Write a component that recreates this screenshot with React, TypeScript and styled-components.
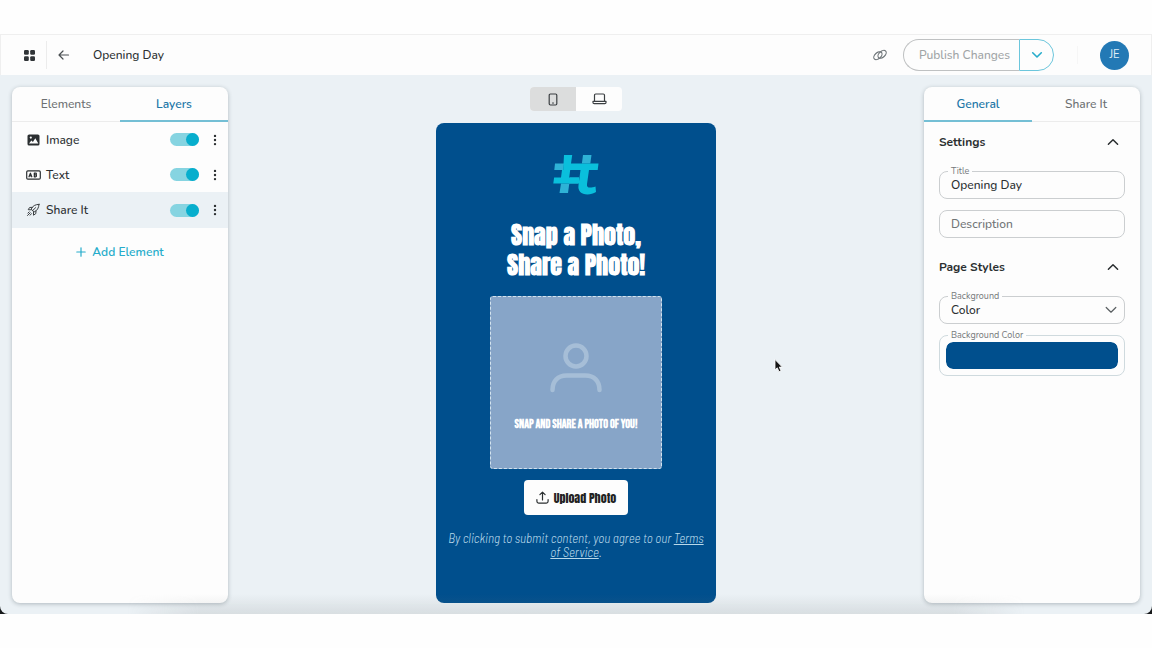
import React, { useState } from "react";
import styled, { createGlobalStyle, css } from "styled-components";

const ui = `Nunito, Lato, "Noto Sans", sans-serif`;
const display = `Anton, "Roboto Condensed", "Liberation Sans Narrow", sans-serif`;
const caps = `"Bebas Neue", Anton, "Roboto Condensed", sans-serif`;
const narrow = `"Barlow Semi Condensed", Barlow, "Roboto Condensed", Roboto, sans-serif`;

const GlobalStyle = createGlobalStyle`
  *, *::before, *::after { box-sizing: border-box; }
  body { margin: 0; background: #fefefe; color: #2b2f31; font-family: ${ui}; font-size: 12px; line-height: 16px; }
  button, input, select { font: inherit; color: inherit; }
  button { cursor: pointer; padding: 0; border: 0; background: none; }
  h1, h2, p, ul { margin: 0; padding: 0; }
  svg { display: block; flex: none; }
`;

const Page = styled.div`
  display: flex;
  flex-direction: column;
  min-height: 100vh;
  padding: 34px 0;
`;

const TopBar = styled.header`
  display: flex;
  align-items: center;
  height: 41px;
  border: 1px solid #efefef;
  border-bottom: 0;
  background: #fdfdfd;
`;

const MenuButton = styled.button`
  display: flex;
  align-items: center;
  justify-content: center;
  width: 46px;
  height: 28px;
  padding-left: 11px;
  border-right: 1px solid #ececec;
`;

const BackButton = styled.button`
  display: flex;
  margin: 0 22px 0 10px;
`;

const ProjectName = styled.h1`
  flex: 1;
  font-size: 12px;
  font-weight: 500;
  line-height: 16px;
`;

const LinkButton = styled.button`
  display: flex;
  margin-right: 16px;
`;

const PublishGroup = styled.div`
  display: flex;
  height: 32px;
`;

const PublishButton = styled.button`
  width: 116px;
  padding-left: 6px;
  border: 1px solid #bfc1c2;
  border-right: 0;
  border-radius: 16px 0 0 16px;
  color: #a0a4a6;
  font-weight: 500;
`;

const PublishMenuButton = styled.button`
  display: flex;
  align-items: center;
  justify-content: center;
  width: 35px;
  border: 1px solid #6cc6dc;
  border-radius: 0 16px 16px 0;
`;

const Divider = styled.span`
  width: 1px;
  height: 18px;
  margin: 0 22px 0 23px;
  background: #f6f6f6;
`;

const Avatar = styled.button`
  width: 29px;
  height: 29px;
  margin-right: 22px;
  border-radius: 50%;
  background: #2379b5;
  color: #e2eff8;
  font-size: 11px;
`;

const WindowBase = styled.div`
  display: flex;
  flex: 1;
  background: #17191b;
`;

const Workspace = styled.main`
  position: relative;
  display: grid;
  grid-template-columns: 216px 1fr 216px;
  flex: 1;
  padding: 12px 12px 11px;
  border-radius: 0 0 8px 8px;
  background: #ebf1f5;

  &::after {
    content: "";
    position: absolute;
    left: 11%;
    right: 11%;
    bottom: 0;
    height: 20px;
    background: linear-gradient(to bottom, rgba(120, 125, 125, 0), rgba(120, 125, 125, 0.16));
    mask-image: linear-gradient(to right, transparent, #000 8%, #000 92%, transparent);
    pointer-events: none;
  }
`;

const Panel = styled.aside`
  border-radius: 8px;
  background: #fdfdfd;
  box-shadow: 0 1px 4px rgba(50, 65, 75, 0.32);
  overflow: hidden;
`;

const Tabs = styled.div`
  display: grid;
  grid-template-columns: 1fr 1fr;
  height: 35px;
`;

const Tab = styled.button<{ $active?: boolean }>`
  border-bottom: 1px solid #ececec;
  color: #6c7072;
  font-weight: 500;
  ${(p) =>
    p.$active &&
    css`
      border-bottom: 2px solid #74bfd5;
      color: #2177a8;
      font-weight: 600;
    `}
`;

const LayerList = styled.ul`
  list-style: none;
`;

const LayerRow = styled.li<{ $selected?: boolean }>`
  display: flex;
  align-items: center;
  height: 35px;
  padding: 0 10px 0 14px;
  ${(p) =>
    p.$selected &&
    css`
      height: 36px;
      background: #ebf1f5;
    `}
`;

const LayerName = styled.label`
  display: flex;
  align-items: center;
  gap: 5px;
  flex: 1;
  font-weight: 500;
`;

const Switch = styled.input`
  appearance: none;
  display: flex;
  width: 29px;
  height: 13px;
  margin: 0 13px 0 0;
  border-radius: 7px;
  background: #c8ccce;
  cursor: pointer;

  &::before {
    content: "";
    width: 13px;
    height: 13px;
    border-radius: 50%;
    background: #8d9498;
  }
  &:checked {
    justify-content: flex-end;
    background: #86d4e1;
  }
  &:checked::before {
    background: #07aecd;
  }
`;

const MoreButton = styled.button`
  display: flex;
`;

const AddButton = styled.button`
  display: flex;
  align-items: center;
  gap: 6px;
  margin: 16px auto 0;
  color: #26accb;
  font-weight: 600;
`;

const Canvas = styled.section`
  display: flex;
  flex-direction: column;
  align-items: center;
`;

const DeviceSwitch = styled.div`
  display: grid;
  grid-template-columns: 1fr 1fr;
  width: 92px;
  height: 24px;
  margin-bottom: 12px;
  border-radius: 4px;
  background: #fdfdfd;
  overflow: hidden;
`;

const DeviceButton = styled.button<{ $active?: boolean }>`
  display: flex;
  align-items: center;
  justify-content: center;
  background: ${(p) => (p.$active ? "#dcdddd" : "transparent")};
`;

const Phone = styled.article`
  display: flex;
  flex-direction: column;
  align-items: center;
  flex: 1;
  width: 280px;
  padding: 31px 12px;
  border-radius: 8px;
  background: #004f8d;
  color: #fff;
`;

const Headline = styled.h2`
  margin: 24px 0 16px;
  font-family: ${display};
  font-size: 24px;
  font-weight: 700;
  line-height: 30px;
  text-align: center;
`;

const DropZone = styled.div`
  display: flex;
  flex-direction: column;
  align-items: center;
  width: 172px;
  height: 173px;
  padding-top: 45px;
  border: 1px dashed #d3e3ee;
  border-radius: 3px;
  background: #87a5c8;
`;

const DropCaption = styled.p`
  margin-top: 24px;
  font-family: ${caps};
  font-size: 12px;
  font-weight: 700;
  line-height: 14px;
  white-space: nowrap;
`;

const UploadButton = styled.button`
  display: flex;
  align-items: center;
  justify-content: center;
  gap: 5px;
  width: 104px;
  height: 35px;
  margin: 11px 0 16px;
  border-radius: 4px;
  background: #fdfdfd;
  color: #222;
  font-family: ${display};
  font-weight: 400;
  white-space: nowrap;
`;

const Terms = styled.p`
  color: #b9d9ea;
  font-family: ${narrow};
  font-size: 13px;
  font-style: italic;
  font-weight: 300;
  line-height: 14px;
  text-align: center;
`;

const TermsLink = styled.a`
  color: inherit;
`;

const Section = styled.section`
  padding: 0 15px;
`;

const SectionToggle = styled.button`
  display: flex;
  align-items: center;
  justify-content: space-between;
  width: 100%;
  height: 38px;
  padding: 2px 6px 0 0;
  font-weight: 700;
`;

const Field = styled.div`
  position: relative;
  margin-top: 11px;

  &:last-child {
    margin-bottom: 9px;
  }
`;

const FieldLabel = styled.label`
  position: absolute;
  top: -6px;
  left: 9px;
  padding: 0 3px;
  background: #fdfdfd;
  color: #75797b;
  font-size: 9px;
  line-height: 12px;
`;

const control = css`
  display: block;
  width: 100%;
  height: 28px;
  padding: 0 11px;
  border: 1px solid #cbced0;
  border-radius: 8px;
  background: transparent;
  font-weight: 500;
  outline: none;
`;

const TextInput = styled.input`
  ${control}
  &::placeholder {
    color: #707476;
    opacity: 1;
  }
`;

const Select = styled.select`
  ${control}
  appearance: none;
`;

const SelectArrow = styled.svg`
  position: absolute;
  top: 10px;
  right: 8px;
  pointer-events: none;
`;

const ColorFrame = styled.div`
  padding: 6px;
  border: 1px solid #cfdade;
  border-radius: 8px;
`;

const ColorInput = styled.input`
  appearance: none;
  display: block;
  width: 100%;
  height: 27px;
  padding: 0;
  border: 0;
  border-radius: 7px;
  background: none;
  overflow: hidden;

  &::-webkit-color-swatch-wrapper {
    padding: 0;
  }
  &::-webkit-color-swatch {
    border: 0;
    border-radius: 7px;
  }
`;

const Pointer = styled.svg`
  position: absolute;
  left: 67%;
  top: 52%;
  pointer-events: none;
`;

const stroke = (color = "#3b3f42", width = 1.3) => ({
  fill: "none",
  stroke: color,
  strokeWidth: width,
  strokeLinecap: "round" as const,
  strokeLinejoin: "round" as const,
});

const GridIcon = () => (
  <svg width="11" height="11" viewBox="0 0 11 11" fill="#303437">
    <rect width="4.8" height="4.8" rx="1.2" />
    <rect x="6.2" width="4.8" height="4.8" rx="1.2" />
    <rect y="6.2" width="4.8" height="4.8" rx="1.2" />
    <rect x="6.2" y="6.2" width="4.8" height="4.8" rx="1.2" />
  </svg>
);

const BackIcon = () => (
  <svg width="14" height="12" viewBox="0 0 14 12" {...stroke("#4a4f52", 1.2)}>
    <path d="M11.5 6H2.2M6 2L2 6l4 4" />
  </svg>
);

const ChainIcon = () => (
  <svg width="14" height="12" viewBox="0 0 14 12" {...stroke("#6d7478", 1.1)}>
    <ellipse cx="4.9" cy="6.7" rx="4.8" ry="3" transform="rotate(-42 4.9 6.7)" />
    <ellipse cx="9.1" cy="5.3" rx="4.8" ry="3" transform="rotate(-42 9.1 5.3)" />
  </svg>
);

const ChevronDown = () => (
  <svg width="12" height="8" viewBox="0 0 12 8" {...stroke("#26accb", 1.6)}>
    <path d="M1.7 1.8L6 6l4.3-4.2" />
  </svg>
);

const ChevronUp = () => (
  <svg width="12" height="8" viewBox="0 0 12 8" {...stroke("#2b2f31", 1.5)}>
    <path d="M1.4 6.3L6 1.7l4.6 4.6" />
  </svg>
);

const ImageIcon = () => (
  <svg width="15" height="14" viewBox="0 0 15 14">
    <rect x="1.5" y="1.5" width="12" height="11" rx="1.6" fill="#2b2f31" />
    <circle cx="4.8" cy="4.6" r="1.1" fill="#fdfdfd" />
    <path d="M3 10.6l2.4-3.2 1.5 1.5L9.3 5.3l3 5.3z" fill="#fdfdfd" />
  </svg>
);

const LettersIcon = () => (
  <svg width="15" height="14" viewBox="0 0 15 14" {...stroke("#2b2f31", 1.2)}>
    <rect x="0.7" y="2.8" width="13.6" height="8.4" rx="1.2" />
    <path d="M3 8.8l1.4-3.6 1.4 3.6M3.5 7.8h1.8M8.3 5.2v3.6h1.5a1 1 0 0 0 0-1.9H8.3M8.3 5.2h1.3a.85.85 0 0 1 0 1.7" />
  </svg>
);

const RocketIcon = () => (
  <svg width="15" height="14" viewBox="0 0 15 14" {...stroke("#3b3f42", 1)}>
    <path d="M13 1.3C9.2 1.5 6.7 2.8 5.2 6.1L8.1 9C11.3 7.5 12.8 5 13 1.3zM6.3 4.3L3.6 4.5 2.2 6.7l3 .1M10 8l-.2 2.6-2.3 1.6V9.2M9.6 4.7L6.7 7.5M3.2 8.9l-1.3 1.2M5.4 10.7l-1.3 1.5M4.2 9.8l-2.7 2.7" />
  </svg>
);

const MoreIcon = () => (
  <svg width="6" height="12" viewBox="0 0 6 12" fill="#2b2f31">
    <circle cx="3" cy="1.9" r="1.2" />
    <circle cx="3" cy="6" r="1.2" />
    <circle cx="3" cy="10.1" r="1.2" />
  </svg>
);

const PlusIcon = () => (
  <svg width="10" height="10" viewBox="0 0 10 10" {...stroke("#26accb", 1.2)}>
    <path d="M5 .8v8.4M.8 5h8.4" />
  </svg>
);

const PhoneIcon = () => (
  <svg width="10" height="13" viewBox="0 0 10 13" {...stroke("#3b3f42", 1.2)}>
    <rect x="1.2" y="1" width="7.6" height="11" rx="1.2" />
    <path d="M4.5 10h1" />
  </svg>
);

const LaptopIcon = () => (
  <svg width="15" height="12" viewBox="0 0 15 12" {...stroke("#3b3f42", 1.2)}>
    <path d="M2.5 8V2.2A1.2 1.2 0 0 1 3.7 1h7.6a1.2 1.2 0 0 1 1.2 1.2V8M1 8.3h13v1.1a1.2 1.2 0 0 1-1.2 1.2H2.2A1.2 1.2 0 0 1 1 9.4z" />
  </svg>
);

const BrandMark = () => (
  <svg width="46" height="42" viewBox="0 0 46 42" role="img" aria-label="Brand mark">
    <path d="M2 9.5h9l-.8 6.5H1.3zM8 29.5h8.3l-1.3 9.5H6.5zM30 1h8.5l-1.2 8.5h-8.4zM17 23.5h9l-1 6h-9z" fill="#2eb2d6" />
    <path
      d="M11 1h8.2L18 9.5h27.5L44.7 16H36l-2 14c-.3 2.6.7 3.6 3 3.6 2 0 3.6-.3 5.5-1.1L43 38c-2.5 1.6-5.5 2.4-8.5 2.4-6.5 0-9.8-3.4-9-9.4L27.5 16H17.2l-1 7.5H26v6H.3l.8-6H8L9 16h1.2z"
      fill="#0abfdc"
    />
  </svg>
);

const PersonIcon = () => (
  <svg width="54" height="52" viewBox="0 0 54 52" {...stroke("#a6bed7", 4.5)}>
    <circle cx="27" cy="14" r="10.5" />
    <path d="M3.5 48c0-9 5.5-14.5 14-14.5h19c8.500 0 14 5.500 14 14.500" />
  </svg>
);

const UploadIcon = () => (
  <svg width="13" height="13" viewBox="0 0 13 13" {...stroke("#2b2f31", 1.2)}>
    <path d="M6.5 9V1.2M3.9 3.7l2.6-2.6 2.6 2.6M.9 8.5v1.8c0 1.2.6 1.8 1.8 1.8h7.6c1.2 0 1.8-.6 1.8-1.8V8.5" />
  </svg>
);

const layers = [
  { id: "image", name: "Image", Icon: ImageIcon },
  { id: "text", name: "Text", Icon: LettersIcon },
  { id: "share", name: "Share It", Icon: RocketIcon },
];

export default function App() {
  const [title, setTitle] = useState("Opening Day");
  const [color, setColor] = useState("#004f8d");

  return (
    <>
      <GlobalStyle />
      <Page>
        <TopBar>
          <MenuButton aria-label="Apps"><GridIcon /></MenuButton>
          <BackButton aria-label="Back"><BackIcon /></BackButton>
          <ProjectName>Opening Day</ProjectName>
          <LinkButton aria-label="Copy link"><ChainIcon /></LinkButton>
          <PublishGroup>
            <PublishButton>Publish Changes</PublishButton>
            <PublishMenuButton aria-label="Publish options"><ChevronDown /></PublishMenuButton>
          </PublishGroup>
          <Divider />
          <Avatar>JE</Avatar>
        </TopBar>

        <WindowBase>
          <Workspace>
            <Panel>
              <Tabs role="tablist">
                <Tab role="tab">Elements</Tab>
                <Tab role="tab" aria-selected $active>Layers</Tab>
              </Tabs>
              <LayerList>
                {layers.map(({ id, name, Icon }) => (
                  <LayerRow key={id} $selected={id === "share"}>
                    <LayerName htmlFor={id}><Icon />{name}</LayerName>
                    <Switch id={id} type="checkbox" role="switch" defaultChecked />
                    <MoreButton aria-label={`${name} options`}><MoreIcon /></MoreButton>
                  </LayerRow>
                ))}
              </LayerList>
              <AddButton><PlusIcon />Add Element</AddButton>
            </Panel>

            <Canvas>
              <DeviceSwitch>
                <DeviceButton aria-label="Phone preview" $active><PhoneIcon /></DeviceButton>
                <DeviceButton aria-label="Desktop preview"><LaptopIcon /></DeviceButton>
              </DeviceSwitch>
              <Phone>
                <BrandMark />
                <Headline>Snap a Photo,<br />Share a Photo!</Headline>
                <DropZone>
                  <PersonIcon />
                  <DropCaption>SNAP AND SHARE A PHOTO OF YOU!</DropCaption>
                </DropZone>
                <UploadButton><UploadIcon />Upload Photo</UploadButton>
                <Terms>
                  By clicking to submit content, you agree to our <TermsLink href="#terms">Terms of Service</TermsLink>.
                </Terms>
              </Phone>
            </Canvas>

            <Panel>
              <Tabs role="tablist">
                <Tab role="tab" aria-selected $active>General</Tab>
                <Tab role="tab">Share It</Tab>
              </Tabs>
              <Section>
                <SectionToggle aria-expanded>Settings<ChevronUp /></SectionToggle>
                <Field>
                  <FieldLabel htmlFor="title">Title</FieldLabel>
                  <TextInput id="title" value={title} onChange={(e) => setTitle(e.target.value)} />
                </Field>
                <Field>
                  <TextInput aria-label="Description" placeholder="Description" />
                </Field>
              </Section>
              <Section>
                <SectionToggle aria-expanded>Page Styles<ChevronUp /></SectionToggle>
                <Field>
                  <FieldLabel htmlFor="background">Background</FieldLabel>
                  <Select id="background">
                    <option>Color</option>
                    <option>Image</option>
                  </Select>
                  <SelectArrow width="12" height="8" viewBox="0 0 12 8" {...stroke("#5a5f62", 1.2)}>
                    <path d="M1.2 1.5L6 6.2l4.8-4.7" />
                  </SelectArrow>
                </Field>
                <Field>
                  <FieldLabel htmlFor="color">Background Color</FieldLabel>
                  <ColorFrame>
                    <ColorInput id="color" type="color" value={color} onChange={(e) => setColor(e.target.value)} />
                  </ColorFrame>
                </Field>
              </Section>
            </Panel>

            <Pointer width="12" height="20" viewBox="0 0 12 20">
              <path d="M3 4.5v10.3l2.3-2 1.7 3.9 2-.9-1.7-3.7h3z" fill="#151515" stroke="#fff" strokeWidth="0.8" />
            </Pointer>
          </Workspace>
        </WindowBase>
      </Page>
    </>
  );
}
